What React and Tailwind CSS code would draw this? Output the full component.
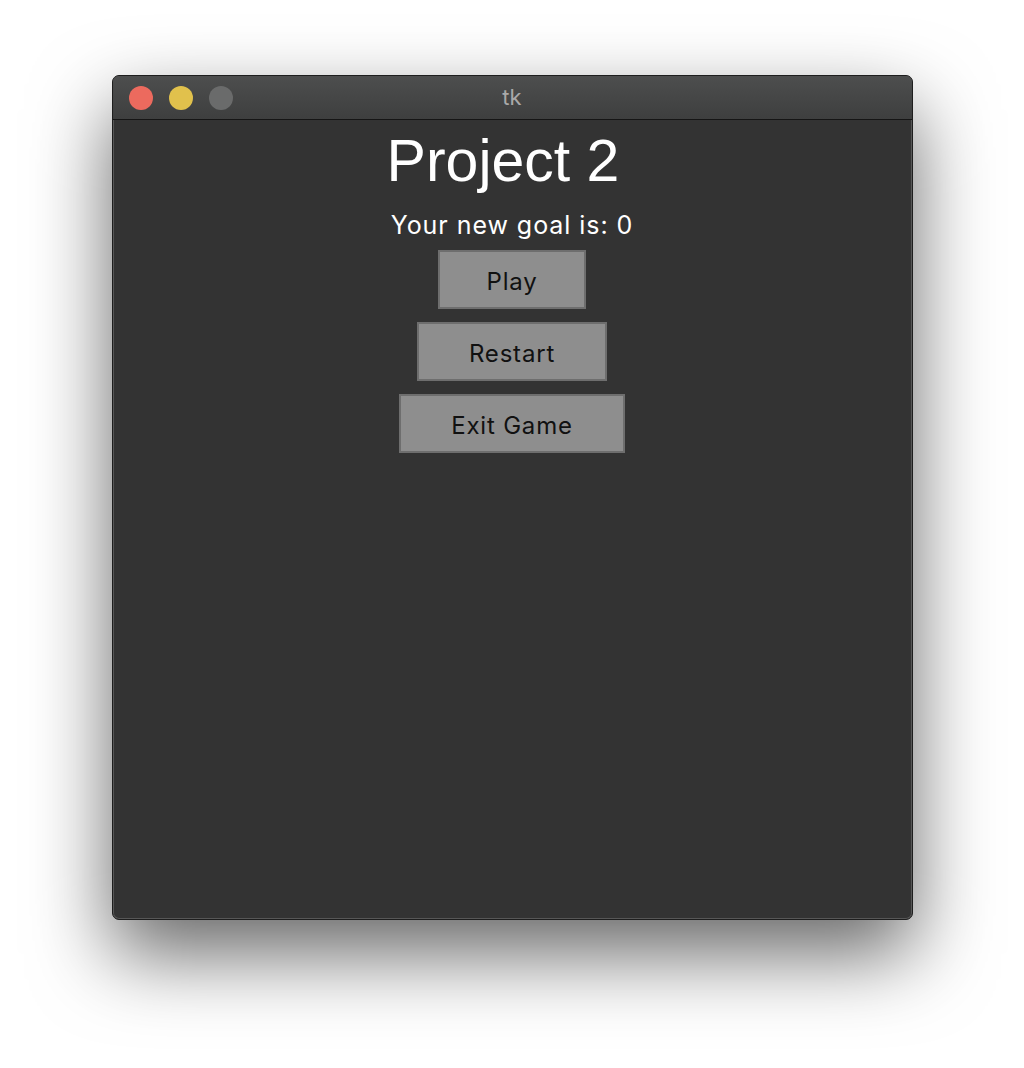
import React from "react";

const buttons = [
  { label: "Play", width: "w-[148px]" },
  { label: "Restart", width: "w-[190px]" },
  { label: "Exit Game", width: "w-[226px]" },
];

export default function App() {
  return (
    <div className="min-h-[1068px] w-full bg-white pt-[75px]">
      {/* window */}
      <div className="mx-auto flex h-[845px] w-[801px] flex-col overflow-hidden rounded-[7px] border border-[#1e1e1e] bg-[#333333] shadow-[0_34px_80px_rgba(0,0,0,0.6),inset_0_0_0_1px_rgba(255,255,255,0.18)]">
        {/* title bar */}
        <div className="relative flex h-[44px] shrink-0 items-center border-b border-[#151515] bg-gradient-to-b from-[#4d4e4e] to-[#3e3f3f] px-[16px]">
          <div className="flex items-center gap-[16px]">
            <span className="h-[24px] w-[24px] rounded-full bg-[#ec6a5e]" />
            <span className="h-[24px] w-[24px] rounded-full bg-[#e1c14c]" />
            <span className="h-[24px] w-[24px] rounded-full bg-[#6a6b6b]" />
          </div>
          <div className="absolute inset-0 flex items-center justify-center font-['Inter',sans-serif] text-[22px] text-[#a9a9a9]">
            tk
          </div>
        </div>

        {/* content */}
        <div className="flex flex-col items-center pt-[12px]">
          <h1 className="pr-[18px] font-['Liberation_Sans',Arial,sans-serif] text-[59px] leading-none text-white">
            Project 2
          </h1>
          <p className="mt-[22px] font-['Inter',sans-serif] text-[25px] leading-none tracking-[0.95px] text-white">
            Your new goal is: 0
          </p>
          <div className="mt-[12px] flex flex-col items-center gap-[13px]">
            {buttons.map((b) => (
              <button
                key={b.label}
                type="button"
                className={`${b.width} flex h-[59px] items-center justify-center border-2 border-[#6e6e6e] bg-[#8e8e8e] pt-[5px] font-['Inter',sans-serif] text-[24px] tracking-[0.8px] text-[#111111]`}
              >
                {b.label}
              </button>
            ))}
          </div>
        </div>
      </div>
    </div>
  );
}
